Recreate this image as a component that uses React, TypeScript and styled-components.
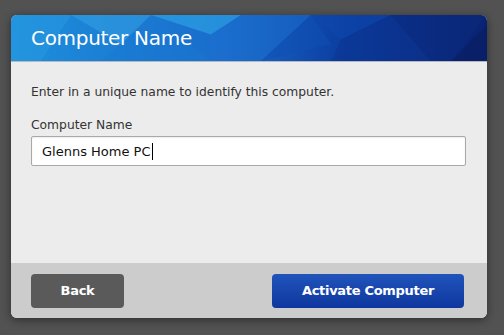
import React from "react";
import styled, { createGlobalStyle } from "styled-components";

const Global = createGlobalStyle`
  html, body { margin: 0; padding: 0; background: #525252; }
  body { font-family: "DejaVu Sans", Verdana, sans-serif; }
  * { box-sizing: border-box; }
`;

const Page = styled.div`
  width: 504px;
  height: 335px;
  padding: 15px 17px 0 11px;
`;

const Dialog = styled.div`
  width: 476px;
  height: 303px;
  border-radius: 6px;
  overflow: hidden;
  display: flex;
  flex-direction: column;
  box-shadow: 0 2px 8px rgba(0, 0, 0, 0.45);
  background: #ececec;
`;

const Header = styled.div`
  position: relative;
  height: 47px;
  flex: none;
  display: flex;
  align-items: center;
  padding: 0 20px;
  background: linear-gradient(90deg, #1d8fdc 0%, #1a6ccb 45%, #0b3da0 70%, #0a2270 100%);
  border-bottom: 1px solid #b8b8b8;
  overflow: hidden;
`;

const Pattern = styled.svg`
  position: absolute;
  inset: 0;
  width: 100%;
  height: 100%;
`;

const Title = styled.h1`
  position: relative;
  margin: 0;
  color: #ffffff;
  font-size: 20px;
  font-weight: normal;
  letter-spacing: -0.3px;
`;

const Body = styled.div`
  flex: 1;
  padding: 23px 20px 0 20px;
  display: flex;
  flex-direction: column;
`;

const Intro = styled.p`
  margin: 0 0 18px 0;
  font-size: 12.3px;
  line-height: 15px;
  color: #333;
`;

const Label = styled.label`
  font-size: 12.3px;
  line-height: 15px;
  color: #333;
  margin-bottom: 3px;
`;

const Input = styled.div`
  height: 30px;
  width: 435px;
  border: 1px solid #a8a8a8;
  border-radius: 2px;
  background: #fff;
  box-shadow: inset 0 1px 2px rgba(0,0,0,0.08);
  display: flex;
  align-items: center;
  padding-left: 10px;
  font-size: 13px;
  color: #111;
`;

const Caret = styled.span`
  display: inline-block;
  width: 1px;
  height: 17px;
  background: #000;
  margin-left: 1px;
`;

const Footer = styled.div`
  height: 55px;
  flex: none;
  background: #cccccc;
  display: flex;
  align-items: center;
  justify-content: space-between;
  padding: 0 23px 0 20px;
`;

const Button = styled.button<{ $primary?: boolean }>`
  height: 34px;
  width: ${(p) => (p.$primary ? "192px" : "93px")};
  border: none;
  border-radius: 4px;
  color: #fff;
  font-family: "DejaVu Sans", Verdana, sans-serif;
  font-weight: bold;
  font-size: 13px;
  letter-spacing: -0.3px;
  background: ${(p) =>
    p.$primary ? "linear-gradient(180deg, #2054bb 0%, #0e379e 100%)" : "#5a5a5a"};
`;

export default function App() {
  return (
    <>
      <Global />
      <Page>
        <Dialog>
          <Header>
            <Pattern viewBox="0 0 476 47" preserveAspectRatio="none">
              <polygon points="0,0 60,0 30,47 0,47" fill="#2a9ae2" opacity="0.5" />
              <polygon points="60,0 140,0 110,30" fill="#39a8e6" opacity="0.45" />
              <polygon points="110,30 140,0 200,47 90,47" fill="#1a78d2" opacity="0.4" />
              <polygon points="140,0 230,0 200,20" fill="#2ea6e6" opacity="0.6" />
              <polygon points="200,20 230,0 300,0 250,47 200,47" fill="#1c6fcf" opacity="0.5" />
              <polygon points="250,47 300,0 320,30" fill="#0f4fb4" opacity="0.5" />
              <polygon points="300,0 380,0 330,25" fill="#0d48ad" opacity="0.5" />
              <polygon points="330,25 380,0 420,47 320,47" fill="#0b348f" opacity="0.5" />
              <polygon points="380,0 476,0 440,47 420,47" fill="#0a2a7e" opacity="0.5" />
              <polygon points="440,47 476,10 476,47" fill="#081c60" opacity="0.6" />
            </Pattern>
            <Title>Computer Name</Title>
          </Header>
          <Body>
            <Intro>Enter in a unique name to identify this computer.</Intro>
            <Label>Computer Name</Label>
            <Input>
              Glenns Home PC<Caret />
            </Input>
          </Body>
          <Footer>
            <Button>Back</Button>
            <Button $primary>Activate Computer</Button>
          </Footer>
        </Dialog>
      </Page>
    </>
  );
}
